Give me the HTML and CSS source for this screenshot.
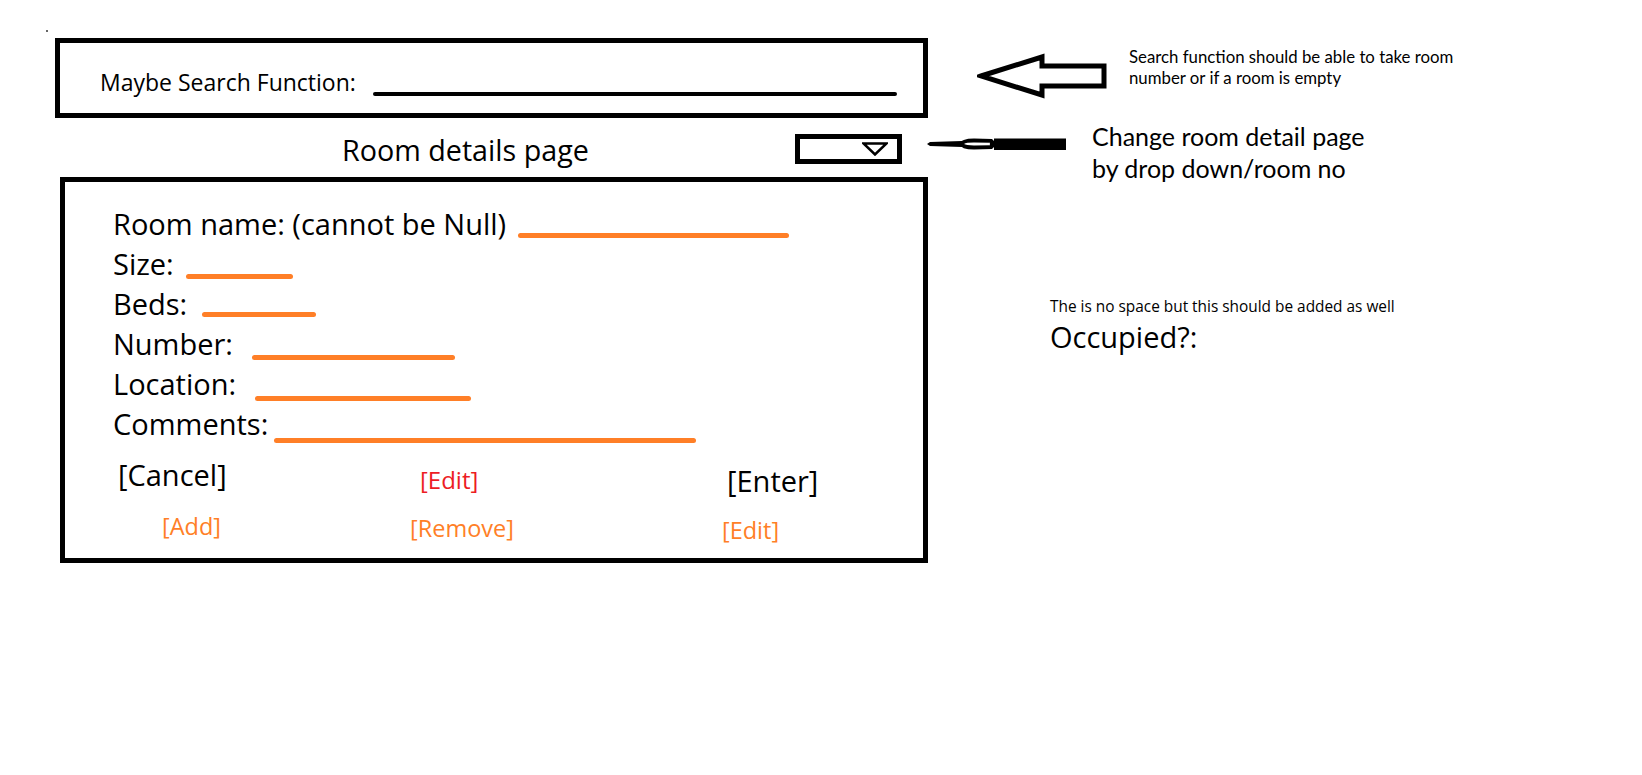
FILE: index.html
```html
<!DOCTYPE html>
<html lang="en">
  <head>
    <meta charset="UTF-8" />
    <title>Room details page</title>
    <link rel="stylesheet" href="styles.css">
  </head>
  <body>
    <div class="speck"></div>

    <div class="page">
      <div class="main-col">
        <div class="search-box">
          <span class="search-label">Maybe Search Function:</span>
          <div class="search-line"></div>
        </div>

        <div class="title-row">
          <h1 class="title">Room details page</h1>
          <div class="dropdown">
            <svg width="26" height="14" viewBox="0 0 26 14">
              <polygon points="1.5,1.5 24.5,1.5 13,12.5" fill="none" stroke="#000" stroke-width="2.5" stroke-linejoin="miter" />
            </svg>
          </div>
        </div>

        <div class="card">
          <div class="field">
            <span class="field-label">Room name: (cannot be Null)</span>
            <div class="field-line line-name"></div>
          </div>
          <div class="field">
            <span class="field-label">Size:</span>
            <div class="field-line line-size"></div>
          </div>
          <div class="field">
            <span class="field-label">Beds:</span>
            <div class="field-line line-beds"></div>
          </div>
          <div class="field">
            <span class="field-label">Number:</span>
            <div class="field-line line-number"></div>
          </div>
          <div class="field">
            <span class="field-label">Location:</span>
            <div class="field-line line-location"></div>
          </div>
          <div class="field">
            <span class="field-label">Comments:</span>
            <div class="field-line line-comments"></div>
          </div>

          <div class="actions">
            <span class="act act-big act-cancel">[Cancel]</span>
            <span class="act act-red act-edit-top">[Edit]</span>
            <span class="act act-big act-enter">[Enter]</span>
            <span class="act act-orange act-add">[Add]</span>
            <span class="act act-orange act-remove">[Remove]</span>
            <span class="act act-orange act-edit">[Edit]</span>
          </div>
        </div>
      </div>

      <div class="side-col">
        <div class="note-row">
          <svg class="arrow-search" width="132" height="48" viewBox="0 0 132 48">
            <polygon points="4,23 65,4 65,13 127,13 127,33 65,33 65,42" fill="#fff" stroke="#000" stroke-width="5" stroke-linejoin="miter" />
          </svg>
          <p class="note note-search">
            Search function should be able to take room<br />
            number or if a room is empty
          </p>
        </div>

        <div class="note-row">
          <svg class="arrow-drop" width="142" height="20" viewBox="0 0 142 20">
            <polygon points="1,10 4,8 36,7 36,13 4,12" fill="#000" />
            <path d="M33 10 Q35 4.5 48 4.5 L66 5 L71 10 L66 15 L48 15.5 Q35 15.5 33 10 Z" fill="#000" />
            <path d="M38 10 Q40 8.6 48 8.6 L64 8.8 L64 11.2 L48 11.4 Q40 11.4 38 10 Z" fill="#fff" />
            <circle cx="65.5" cy="10" r="1.8" fill="#000" />
            <rect x="68" y="4.5" width="72" height="11.5" fill="#000" />
          </svg>
          <p class="note note-drop">
            Change room detail page<br />
            by drop down/room no
          </p>
        </div>

        <div class="extra">
          <p class="extra-hint">The is no space but this should be added as well</p>
          <p class="extra-field">Occupied?:</p>
        </div>
      </div>
    </div>
  </body>
</html>
```

FILE: styles.css
```css
body {
  font-family: "Open Sans", "Noto Sans", sans-serif;
  background-color: #fff;
  color: #000;
  margin: 0;
}

p,
h1 {
  margin: 0;
}

.speck {
  width: 2px;
  height: 2px;
  margin: 30px 0 0 46px;
  background-color: #666;
}

.page {
  display: flex;
  align-items: flex-start;
  margin-top: 6px;
}

.main-col {
  width: 873px;
  margin-left: 55px;
  flex: none;
}

/* search bar */

.search-box {
  display: flex;
  align-items: center;
  height: 80px;
  box-sizing: border-box;
  border: 5px solid #000;
  padding: 7px 26px 0 40px;
}

.search-label {
  font-size: 23px;
}

.search-line {
  width: 524px;
  height: 4px;
  margin-left: auto;
  margin-bottom: 17px;
  align-self: flex-end;
  background-color: #000;
  border-radius: 2px;
}

/* title + dropdown */

.title-row {
  display: flex;
  align-items: flex-start;
  height: 59px;
}

.title {
  margin: 15px 0 0 287px;
  font-size: 28.7px;
  font-weight: normal;
  line-height: 34px;
}

.dropdown {
  display: flex;
  justify-content: flex-end;
  width: 107px;
  height: 30px;
  box-sizing: border-box;
  margin: 16px 26px 0 auto;
  padding: 3px 9px 0 0;
  border: 5px solid #000;
}

/* card */

.card {
  height: 386px;
  box-sizing: border-box;
  margin-left: 5px;
  padding: 22px 0 0 48px;
  border: 5px solid #000;
}

.field {
  display: flex;
  align-items: flex-start;
  height: 40px;
}

.field-label {
  font-size: 29px;
  line-height: 40px;
  white-space: nowrap;
}

.field-line {
  height: 5px;
  margin-top: 29px;
  background-color: #ff7f27;
  border-radius: 3px;
}

.line-name {
  width: 271px;
  margin-left: 12px;
}

.line-size {
  width: 107px;
  margin-left: 12px;
  margin-top: 30px;
}

.line-beds {
  width: 114px;
  margin-left: 15px;
  margin-top: 28px;
}

.line-number {
  width: 203px;
  margin-left: 19px;
  margin-top: 31px;
}

.line-location {
  width: 216px;
  margin-left: 19px;
  margin-top: 32px;
}

.line-comments {
  width: 422px;
  margin-left: 6px;
  margin-top: 34px;
}

.actions {
  display: grid;
  grid-template-columns: 292px 310px 1fr;
  grid-template-rows: 50px 60px;
  margin-top: 10px;
}

.act {
  align-self: start;
  justify-self: start;
  font-size: 23.5px;
  line-height: 1;
  white-space: nowrap;
}

.act-big {
  font-size: 29px;
}

.act-red {
  color: #ed1c24;
  font-size: 24px;
}

.act-orange {
  color: #ff7f27;
}

.act-cancel {
  margin: 6px 0 0 5px;
}

.act-edit-top {
  margin: 14px 0 0 15px;
}

.act-enter {
  margin: 12px 0 0 12px;
}

.act-add {
  margin: 11px 0 0 49px;
}

.act-remove {
  margin: 13px 0 0 5px;
}

.act-edit {
  margin: 15px 0 0 7px;
}

/* side notes */

.side-col {
  flex: none;
}

.note-row {
  display: flex;
  align-items: flex-start;
}

.arrow-search {
  margin: 15px 0 0 49px;
}

.note {
  font-family: "Lato", "Open Sans", sans-serif;
}

.note-search {
  margin: 8px 0 0 20px;
  font-size: 16.8px;
  line-height: 21px;
}

.arrow-drop {
  margin: 33px 0 0 -2px;
}

.note-drop {
  margin: 19px 0 0 24px;
  font-size: 25px;
  line-height: 32px;
}

.extra {
  margin: 112px 0 0 122px;
}

.extra-hint {
  font-size: 15.4px;
}

.extra-field {
  font-size: 29px;
}
```
